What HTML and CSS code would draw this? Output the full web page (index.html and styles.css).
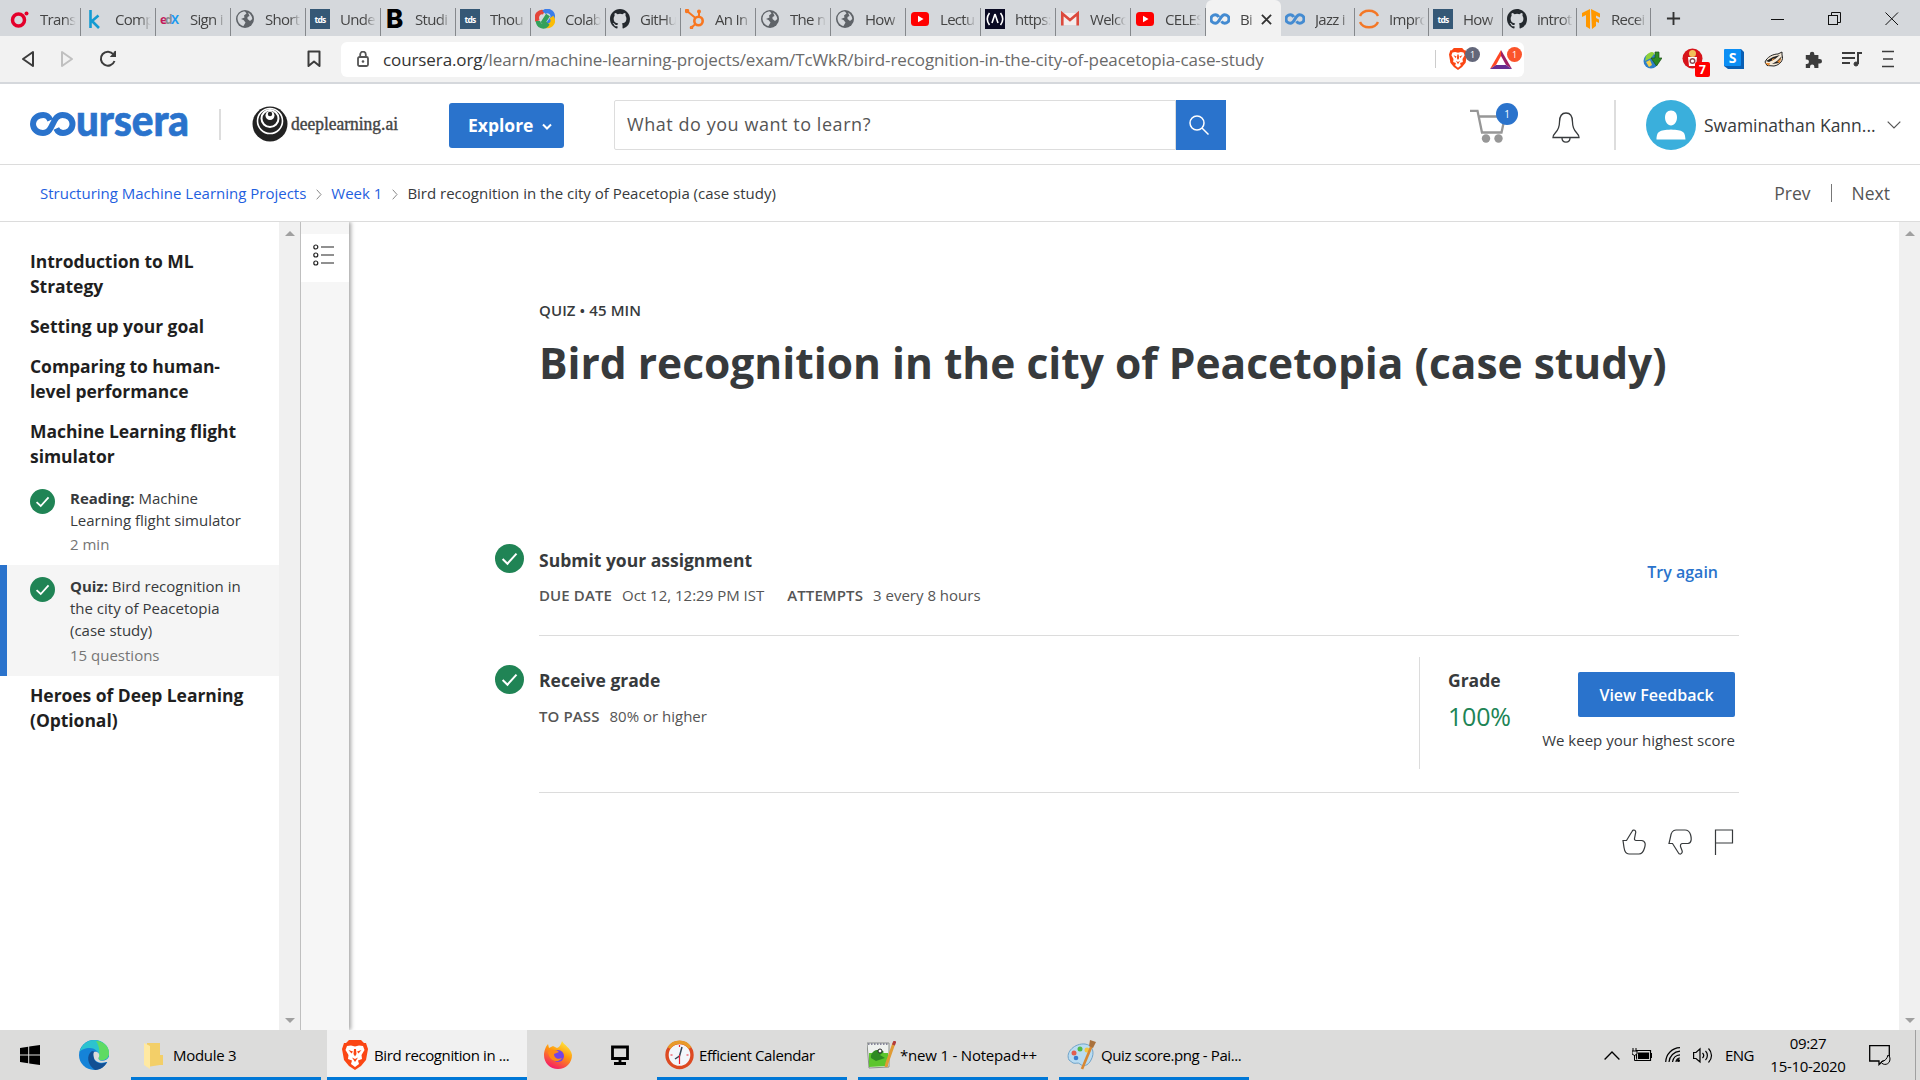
FILE: index.html
```html
<!DOCTYPE html>
<html lang="en">
<head>
<meta charset="utf-8">
<title>Bird recognition in the city of Peacetopia (case study)</title>
<link rel="stylesheet" href="styles.css">
</head>
<body>
<svg class="defs" aria-hidden="true">
  <symbol id="globe" viewBox="0 0 20 20"><circle cx="10" cy="10" r="9" fill="#5f6368"/><path d="M2.500 9C3 5 6 2.500 10 2.500L11.500 4.500 9 6.500 9.500 8.500 6 10 8.500 11 10.500 13.500 8.500 17C5 16.500 2.500 13 2.500 9ZM13 3.500C15 4.500 17 7 17.300 10L15 12 12.500 10 12.500 8 14.500 7Z" fill="#d5d8dc"/></symbol>
  <symbol id="github" viewBox="0 0 16 16"><path fill="#24292e" d="M8 0C3.580 0 0 3.580 0 8c0 3.540 2.290 6.530 5.470 7.590.4.070.55-.17.55-.38v-1.490c-2.010.37-2.530-.49-2.690-.94-.09-.23-.48-.94-.82-1.130-.28-.15-.68-.52-.01-.53.63-.01 1.080.58 1.230.82.72 1.210 1.870.87 2.330.66.07-.52.28-.87.51-1.070-1.780-.2-3.640-.89-3.640-3.950 0-.87.31-1.590.82-2.150-.08-.2-.36-1.020.08-2.120 0 0 .67-.21 2.200.82a7.600 7.600 0 0 1 4 0c1.530-1.040 2.200-.82 2.200-.82.44 1.100.16 1.920.08 2.120.51.56.82 1.270.82 2.150 0 3.070-1.870 3.750-3.650 3.950.29.25.54.73.54 1.480v2.200c0 .21.150.46.55.38A8 8 0 0 0 16 8c0-4.420-3.580-8-8-8z"/></symbol>
  <symbol id="youtube" viewBox="0 0 20 20"><rect x="1" y="3" width="18" height="14" rx="3.500" fill="#f00"/><path d="M8 6.700 13.500 10 8 13.300Z" fill="#fff"/></symbol>
  <symbol id="infinity" viewBox="0 0 20 20"><path d="M8.800 8C7.800 6.200 6.500 5.700 5.300 5.700a4.200 4.200 0 0 0 0 8.600c4.700 0 4.700-8.600 9.400-8.600a4.200 4.200 0 0 1 0 8.600c-1.600 0-2.600-.9-3.200-2" fill="none" stroke="#448bd1" stroke-width="3"/></symbol>
  <symbol id="tds" viewBox="0 0 20 20"><rect width="20" height="20" fill="#355876"/><text x="10" y="13.500" text-anchor="middle" class="tds-text">tds</text></symbol>
  <symbol id="check" viewBox="0 0 24 24"><circle cx="12" cy="12" r="12" fill="#208455"/><path d="M6.300 12.500 10.300 16.300 17.800 8" fill="none" stroke="#fff" stroke-width="1.700"/></symbol>
  <symbol id="brave" viewBox="0 0 26 30"><path d="M7 0H19L22 3 24 3 26 9 24 20 19 26 13 30 7 26 2 20 0 9 2 3 4 3Z" fill="#fb4614"/><path d="M5 6 9 5.500 13 6.500 17 5.500 21 6 22.500 10 19.500 15 20 19 16 20.500 17 24 13 27 9 24 10 20.500 6 19 6.500 15 3.500 10Z" fill="#fff"/><path d="M6.500 10 11 11.500 9.500 13.500ZM19.500 10 15 11.500 16.500 13.500ZM10 17.500 13 19 16 17.500 13 22ZM12 9H14L14.500 14 13 16.500 11.500 14Z" fill="#fb4614"/></symbol>
</svg>

<div class="tabs">
  <div class="tab"><svg class="fav" viewBox="0 0 20 20"><circle cx="8.500" cy="11" r="6" fill="none" stroke="#e4002b" stroke-width="3.500"/><circle cx="16.500" cy="4.500" r="2" fill="#e4002b"/></svg><span>Trans</span></div>
  <div class="tab"><svg class="fav" viewBox="0 0 20 20"><path d="M5.500 1V19M13.500 6.500 7 12 14 19" fill="none" stroke="#149bd2" stroke-width="2.600"/></svg><span>Comp</span></div>
  <div class="tab"><svg class="fav" viewBox="0 0 20 20"><text x="0" y="14.500" class="edx-text" fill="#c2185b">e</text><text x="5" y="14.500" class="edx-text" fill="#8a8d90">d</text><text x="11" y="14.500" class="edx-text" fill="#1b9af0">X</text></svg><span>Sign i</span></div>
  <div class="tab"><svg class="fav"><use href="#globe"/></svg><span>Short</span></div>
  <div class="tab"><svg class="fav"><use href="#tds"/></svg><span>Unde</span></div>
  <div class="tab"><svg class="fav" viewBox="0 0 20 20"><text x="1" y="19" class="b-text">B</text></svg><span>Studi</span></div>
  <div class="tab"><svg class="fav"><use href="#tds"/></svg><span>Thou</span></div>
  <div class="tab"><svg class="fav" viewBox="0 0 20 20" fill="none" stroke-width="4.500"><path d="M2.500 12C0 6 5 1.500 9 3.500" stroke="#e4453a"/><path d="M9 3.500C12 0 19 3 17.500 9L13 15" stroke="#3b7de9"/><path d="M16.500 8C20 13 16 17.500 11.500 17" stroke="#fbbc05"/><path d="M3 12C3 17 9 19 11.500 16L8.500 13 13 6" stroke="#34a05a"/></svg><span>Colab</span></div>
  <div class="tab"><svg class="fav"><use href="#github"/></svg><span>GitHu</span></div>
  <div class="tab"><svg class="fav" viewBox="0 0 20 20" fill="none" stroke="#f8761f" stroke-width="2"><circle cx="13.500" cy="12" r="4.200" stroke-width="2.600"/><path d="M2 2 10.500 9M14 8V3M10.500 15 7 18"/><circle cx="2" cy="2" r="1.300"/><circle cx="14" cy="2.500" r="1"/><circle cx="6.500" cy="18.500" r=".8"/></svg><span>An In</span></div>
  <div class="tab"><svg class="fav"><use href="#globe"/></svg><span>The n</span></div>
  <div class="tab"><svg class="fav"><use href="#globe"/></svg><span>How</span></div>
  <div class="tab"><svg class="fav"><use href="#youtube"/></svg><span>Lectu</span></div>
  <div class="tab"><svg class="fav" viewBox="0 0 20 20"><rect width="20" height="20" fill="#0a0a23"/><path d="M4.500 4C1.500 8 1.500 12 4.500 16M15.500 4C18.500 8 18.500 12 15.500 16M10 5 7 14M10 5 13 14" fill="none" stroke="#fff" stroke-width="1.600"/></svg><span>https:</span></div>
  <div class="tab"><svg class="fav" viewBox="0 0 20 20"><path d="M2 4H18V16H2Z" fill="#f3eeee"/><path d="M2.300 16.500V4.500L10 11 17.700 4.500V16.500" fill="none" stroke="#dc4a3d" stroke-width="2.600"/></svg><span>Welco</span></div>
  <div class="tab"><svg class="fav"><use href="#youtube"/></svg><span>CELES</span></div>
  <div class="tab active"><svg class="fav"><use href="#infinity"/></svg><span>Bi</span><svg class="close" viewBox="0 0 12 12"><path d="M1 1 11 11M11 1 1 11" stroke="#333" stroke-width="2"/></svg></div>
  <div class="tab late"><svg class="fav"><use href="#infinity"/></svg><span>Jazz i</span></div>
  <div class="tab late"><svg class="fav" viewBox="0 0 20 20" fill="none" stroke="#f37726" stroke-width="2.400"><path d="M1 7C4 0 16 0 19 7M1 13C4 20 16 20 19 13"/></svg><span>Impro</span></div>
  <div class="tab late"><svg class="fav"><use href="#tds"/></svg><span>How</span></div>
  <div class="tab late"><svg class="fav"><use href="#github"/></svg><span>introt</span></div>
  <div class="tab late"><svg class="fav" viewBox="0 0 20 20"><path d="M9 0V20L5 17.500V6L1 8V4ZM10 0 19 4.500V8.500L15 6.500V9L18 10.500V14L15 12.500V17L11 20Z" fill="#ff9800"/></svg><span>Recei</span></div>
  <svg class="newtab" viewBox="0 0 16 16"><path d="M8 1V15M1 8H15" stroke="#333" stroke-width="2"/></svg>
  <div class="winctl">
    <svg width="14" height="14" viewBox="0 0 14 14"><path d="M0 7.500H13" stroke="#111"/></svg>
    <svg width="14" height="14" viewBox="0 0 14 14" fill="none" stroke="#111"><rect x=".5" y="3.500" width="9" height="9"/><path d="M3.500 3.500V.5H12.500V10.500H9.500"/></svg>
    <svg width="14" height="14" viewBox="0 0 14 14"><path d="M.5.5 13 13M13 .5.5 13" stroke="#111"/></svg>
  </div>
</div>

<div class="toolbar">
  <div class="nav">
    <svg width="14" height="18" viewBox="0 0 14 18"><path d="M12 2V16L2 9Z" fill="none" stroke="#3c3c3c" stroke-width="2" stroke-linejoin="round"/></svg>
    <svg width="14" height="18" viewBox="0 0 14 18"><path d="M2 2V16L12 9Z" fill="none" stroke="#c0c0c0" stroke-width="2" stroke-linejoin="round"/></svg>
    <svg width="18" height="18" viewBox="0 0 18 18"><path d="M14.500 4.500A7 7 0 1 0 15.500 11" fill="none" stroke="#3c3c3c" stroke-width="2"/><path d="M17 .8V7H10.800C12 5 14.500 4 15 1.500Z" fill="#3c3c3c"/></svg>
  </div>
  <svg class="bookmark" viewBox="0 0 14 18"><path d="M1.500 1.500H12.500V16L7 11.500 1.500 16Z" fill="none" stroke="#3c3c3c" stroke-width="2" stroke-linejoin="round"/></svg>
  <div class="address">
    <svg class="lock" viewBox="0 0 12 16"><rect x="1" y="6" width="10" height="9" rx="1.500" fill="none" stroke="#555" stroke-width="1.800"/><path d="M3.200 6V3.500a2.800 2.800 0 0 1 5.600 0V6" fill="none" stroke="#555" stroke-width="1.800"/><circle cx="6" cy="10.500" r="1.300" fill="#555"/></svg>
    <div class="url"><b>coursera.org</b>/learn/machine-learning-projects/exam/TcWkR/bird-recognition-in-the-city-of-peacetopia-case-study</div>
    <div class="shields">
      <div class="ext"><svg width="18" height="22" viewBox="0 0 26 30" preserveAspectRatio="none"><use href="#brave"/></svg><i class="pill grey">1</i></div>
      <div class="ext bat"><svg width="22" height="19" viewBox="0 0 22 19"><path d="M11 0V6L6 15 0 19Z" fill="#ff4724"/><path d="M11 0 22 19 16 15 11 6Z" fill="#9e1f63"/><path d="M0 19 6 15H16L22 19Z" fill="#662d91"/></svg><i class="pill orange">1</i></div>
    </div>
  </div>
  <div class="extensions">
    <svg width="20" height="20" viewBox="0 0 20 20"><circle cx="9" cy="12" r="7.500" fill="#2e7fc8"/><path d="M4 7C8 1 13 3 12 5L9 9 3 12Z" fill="#8fd13a"/><path d="M13 3H17V9H20L14.500 17 9 9H13Z" fill="#2c8b22" stroke="#1b4d17" stroke-width=".7"/><path d="M4 13 8 11 10 16 7 18Z" fill="#f2cf4b"/></svg>
    <div class="ext"><svg width="22" height="22" viewBox="0 0 22 22"><circle cx="10.500" cy="10.500" r="10" fill="#d7141a"/><path d="M6 9H15L14 18H7Z" fill="#fff"/><circle cx="10.500" cy="5.500" r="3.500" fill="#f1c15a"/><circle cx="10.500" cy="13" r="2.300" fill="none" stroke="#8a4a52" stroke-width="1.500"/></svg><i class="count">7</i></div>
    <svg width="20" height="20" viewBox="0 0 20 20"><path d="M2 0H17L20 3V20H4L0 17Z" fill="#0a5fb4"/><rect width="17" height="17" rx="1" fill="#0c8ff5"/><text x="8.500" y="14" text-anchor="middle" class="s-text">S</text></svg>
    <svg width="20" height="20" viewBox="0 0 20 20"><path d="M1 13C3 8 9 5 14 5L18 3 18 6C20 11 16 16 10 17L3 16.500Z" fill="#f6ead8" stroke="#222"/><path d="M2 12 9 8 16 6 11 10 5 13ZM8 15 13 12 18 7 15 14Z" fill="#222"/><path d="M1 14 6 14 5 17ZM13 13 17 9 16 14ZM8 10 11 9 8 12Z" fill="#e88b34"/></svg>
    <svg width="18" height="19" viewBox="0 0 20 20"><path d="M2 5H6.500V4a2.500 2.500 0 0 1 5 0V5H16V9.500H17.500a2.500 2.500 0 0 1 0 5H16V19.500H11.500V18a2.400 2.400 0 0 0-4.800 0V19.500H2V15H3a2.500 2.500 0 0 0 0-5H2Z" fill="#3c3c3c"/></svg>
    <svg width="20" height="16" viewBox="0 0 20 16" fill="none" stroke="#3c3c3c" stroke-width="2"><path d="M0 2H13M0 7H13M0 12H8M16 13V2H20"/><circle cx="14" cy="13" r="2" fill="#3c3c3c" stroke-width="1"/></svg>
    <svg width="12" height="18" viewBox="0 0 12 18"><path d="M0 1.500H12M1 9H11M0 16.500H12" stroke="#3c3c3c" stroke-width="1.700"/></svg>
  </div>
</div>

<header class="site-header">
  <svg class="logo" viewBox="0 0 160 26"><path d="M20.300 9.200C18.500 5 15.500 4 13.300 4 7.500 4 3 7.800 3 13S7.500 22 13 22C24 22 21.500 4 32.500 4c6 0 10 4 10 9s-4 9-9.500 9c-3 0-5.300-1.500-6.700-4.600" fill="none" stroke="#2a73cc" stroke-width="6"/><text x="46" y="24.500" textLength="113" lengthAdjust="spacingAndGlyphs" class="logo-text">ursera</text></svg>
  <div class="partner">
    <svg width="36" height="36" viewBox="0 0 36 36"><circle cx="18" cy="18" r="17.500" fill="#222"/><g fill="none" stroke="#fff"><circle cx="18" cy="15" r="12.500" stroke-width="1.600"/><circle cx="18" cy="12.500" r="8.500" stroke-width="2"/></g><circle cx="18" cy="9.500" r="4.500" fill="#fff"/><circle cx="18" cy="8" r="2.200" fill="#222"/></svg>
    <svg width="108" height="26" viewBox="0 0 108 26"><text x="0" y="18.500" textLength="107" lengthAdjust="spacingAndGlyphs" class="partner-text">deeplearning.ai</text></svg>
  </div>
  <button class="explore"><span>Explore</span><svg width="10" height="8" viewBox="0 0 10 8"><path d="M1 1.500 5 5.500 9 1.500" fill="none" stroke="#fff" stroke-width="2"/></svg></button>
  <div class="search"><div class="field">What do you want to learn?</div><div class="go"><svg width="20" height="20" viewBox="0 0 20 20" fill="none" stroke="#fff" stroke-width="1.500"><circle cx="8" cy="8" r="7"/><path d="M13 13 19.500 19.500"/></svg></div></div>
  <div class="cart"><svg width="36" height="34" viewBox="0 0 36 34"><path d="M0 1.800H7.500L12 23.500H31.500L35 7.500H9" fill="none" stroke="#979797" stroke-width="2.300"/><circle cx="16" cy="29.500" r="4.200" fill="#979797"/><circle cx="28.500" cy="29.500" r="4.200" fill="#979797"/></svg><i class="cart-count">1</i></div>
  <svg class="bell" viewBox="0 0 28 31" fill="none" stroke="#373a3c" stroke-width="1.300"><path d="M1 25.500C1 20 7.500 21 7.500 10 7.500 4 10 1 14 1S20.500 4 20.500 10C20.500 21 27 20 27 25.500Z"/><path d="M10 26C10 31.500 18 31.500 18 26"/></svg>
  <div class="user"><svg width="50" height="50" viewBox="0 0 50 50"><circle cx="25" cy="25" r="25" fill="#3aafdc"/><path d="M25 10.500c4 0 6 3 6 7s-2.500 8-6 8-6-4-6-8 2-7 6-7ZM10.500 39.500C11 31 13 30.500 25 29.500 37 30.500 39 31 39.500 39.500Z" fill="#fff"/></svg><span>Swaminathan Kann...</span><svg width="14" height="8" viewBox="0 0 14 8"><path d="M.7.700 7 7 13.300.7" fill="none" stroke="#555" stroke-width="1.200"/></svg></div>
</header>

<nav class="crumbs">
  <a>Structuring Machine Learning Projects</a><svg class="sep" viewBox="0 0 6 11"><path d="M.7.700 5 5.500.7 10.300" fill="none" stroke="#888"/></svg><a>Week 1</a><svg class="sep" viewBox="0 0 6 11"><path d="M.7.700 5 5.500.7 10.300" fill="none" stroke="#888"/></svg><span>Bird recognition in the city of Peacetopia (case study)</span>
  <div class="pager"><span>Prev</span><i></i><span>Next</span></div>
</nav>

<div class="body">
  <aside class="sidebar">
    <h3>Introduction to ML Strategy</h3>
    <h3>Setting up your goal</h3>
    <h3>Comparing to human-level performance</h3>
    <h3>Machine Learning flight simulator</h3>
    <div class="item"><svg><use href="#check"/></svg><div><p><b>Reading:</b> Machine Learning flight simulator</p><small>2 min</small></div></div>
    <div class="item current"><svg><use href="#check"/></svg><div><p><b>Quiz:</b> Bird recognition in the city of Peacetopia (case study)</p><small>15 questions</small></div></div>
    <h3>Heroes of Deep Learning (Optional)</h3>
  </aside>
  <div class="scrollbar"><i class="up"></i><i class="down"></i></div>
  <div class="rail"><div class="toggle"><svg width="22" height="22" viewBox="0 0 22 22" fill="none" stroke="#222" stroke-width="1.200"><circle cx="2.800" cy="3" r="2"/><circle cx="2.800" cy="11" r="2"/><circle cx="2.800" cy="19" r="2"/><path d="M8 3H21M8 11H21M8 19H21"/></svg></div></div>
  <main class="main">
    <div class="kind">QUIZ • 45 MIN</div>
    <h1>Bird recognition in the city of Peacetopia (case study)</h1>
    <section class="step submit">
      <svg class="done"><use href="#check"/></svg>
      <div class="info"><h2>Submit your assignment</h2><p><b>DUE DATE</b><span>Oct 12, 12:29 PM IST</span><b>ATTEMPTS</b><span>3 every 8 hours</span></p></div>
      <a class="retry">Try again</a>
    </section>
    <section class="step receive">
      <svg class="done"><use href="#check"/></svg>
      <div class="info"><h2>Receive grade</h2><p><b>TO PASS</b><span>80% or higher</span></p></div>
      <div class="result">
        <div class="grade"><h2>Grade</h2><div class="score">100%</div></div>
        <div class="feedback"><button>View Feedback</button><p>We keep your highest score</p></div>
      </div>
    </section>
    <div class="votes">
      <svg width="24" height="26" viewBox="0 0 24 26"><path d="M1 11.500H4.500L10 2.500C11.500-.5 14.500 1.500 13.500 4.500L12.500 9.500C12.300 10.800 13 11.500 14 11.500H19.500C24 12 23.500 16 22.500 19 21.500 22.500 20 25 17 25H7C3.500 25 2.500 22 2 18.500Z" fill="none" stroke="#373a3c" stroke-width="1.200"/></svg>
      <svg width="24" height="26" viewBox="0 0 24 26"><path d="M1 14.500H4.500L10.500 24C12 26.500 15 24 14 21.500L12.500 17.500C12.300 15.500 13 14.500 14.500 14.500H20C24 14 23.500 9 22.500 5.500 21.500 2.500 20 1 17 1H8C4 1 3 4 2.500 8Z" fill="none" stroke="#373a3c" stroke-width="1.200"/></svg>
      <svg width="20" height="26" viewBox="0 0 20 26"><path d="M1.500 26V1H18.500V14H1.500" fill="none" stroke="#373a3c" stroke-width="1.200"/></svg>
    </div>
  </main>
  <div class="scrollbar page"><i class="up"></i><i class="down"></i></div>
</div>

<footer class="taskbar">
  <div class="start"><svg width="20" height="20" viewBox="0 0 20 20"><path d="M0 3 8.200 1.800V9.500H0ZM9.200 1.600 20 0V9.500H9.200ZM0 10.500H8.200V18.200L0 17ZM9.200 10.500H20V20L9.200 18.400Z"/></svg></div>
  <svg class="edge" viewBox="0 0 30 30"><circle cx="15" cy="15" r="15" fill="#1583d8"/><path d="M.5 12C3 3 10 0 15 0 24 0 30 6 30 13 30 18 26 21 21 20 19 19 19 18 20 16 20 11 15 8 11 8 6 8 2 10 .5 12Z" fill="#2cc3cf"/><path d="M21 1.500C28 4 30 9 30 13 30 18 26 21 21 20 19 19 19 18 20 16 21 12 20 5 17 1Z" fill="#5fdb63"/><path d="M13 11C7 15 8 25 16 29.900 22 30 26 26 28 22 22 25 16 23 15 18 14 15 15 13 17 12Z" fill="#124f93"/><path d="M15 12C19 11 21 14 20 17 19 18 19 19 21 20.500 25 21.500 28 20 30 17V22H27C22 24 16 22 15 18 14.500 15 14 14 15 12Z" fill="#dcdcdb"/></svg>
  <div class="app folder"><svg width="19" height="27" viewBox="0 0 19 27"><path d="M3 1H16V23L3 25Z" fill="#f3cf68"/><path d="M0 1 6 4V27L0 23Z" fill="#ffe9a2"/><path d="M16 13H19V23H16Z" fill="#f3cf68"/></svg><span>Module 3</span></div>
  <div class="app brave"><svg width="26" height="30"><use href="#brave"/></svg><span>Bird recognition in ...</span></div>
  <svg class="firefox" viewBox="0 0 28 28"><defs><linearGradient id="fx" x1=".8" y1="0" x2=".3" y2="1"><stop offset="0" stop-color="#fff044"/><stop offset=".45" stop-color="#ff980e"/><stop offset="1" stop-color="#f5156c"/></linearGradient></defs><path d="M18 0C20 4 27 7 28 14 28 22 22 28 14 28S0 22 0 14C0 10 2 5 4 3L5 7 9 5 13 7C16 6 17 3 18 0Z" fill="url(#fx)"/><circle cx="14" cy="15" r="6" fill="#7543e5"/><path d="M4 11C9 8 13 9 15 11L10 13C10 17 14 19 18 17 14 23 5 20 4 11Z" fill="#ff8a16"/></svg>
  <svg class="monitor" viewBox="0 0 18 20"><path d="M1.500 2H16.500V13.500H1.500ZM9 14V18M3 18.500H15" fill="none" stroke="#000" stroke-width="2.800"/></svg>
  <div class="app calendar"><svg width="29" height="30" viewBox="0 0 29 30"><circle cx="14.500" cy="15" r="12.500" fill="#f3f6fa" stroke="#dd4a22" stroke-width="3.400"/><path d="M4 8A12.500 12.500 0 0 1 25 8" fill="none" stroke="#e89a28" stroke-width="3.400"/><path d="M17 7 14.500 16 10 19" fill="none" stroke="#345" stroke-width="1.500"/><path d="M14.500 15V24M14.500 5V7M5.500 15H7.500M21.500 15H23.500" stroke="#e23" stroke-width="1.200"/></svg><span>Efficient Calendar</span></div>
  <div class="app notepad"><svg width="29" height="28" viewBox="0 0 29 28"><path d="M0 2H22V26L2 27Z" fill="#eef1ee" stroke="#8a8f8a"/><path d="M2 12H21V25L2 26Z" fill="#5cc52d"/><path d="M1 3H21" stroke="#889" stroke-width="2" stroke-dasharray="1.500 1.500"/><path d="M4 17C3 10 12 6 17 11L13 14 18 17 9 20Z" fill="#2e8a22"/><circle cx="13" cy="10" r="2" fill="#fff" stroke="#222"/><path d="M27 2 20 22 19 26" stroke="#e09b35" stroke-width="3" fill="none"/><path d="M28 0 26.500 4" stroke="#b33b3b" stroke-width="3"/></svg><span>*new 1 - Notepad++</span></div>
  <div class="app paint"><svg width="30" height="30" viewBox="0 0 30 30"><path d="M2 20C-2 12 8 3 18 4 26 5 28 13 24 20 21 26 16 27 13 24 11 22 9 24 6 23Z" fill="#b9dcf2" stroke="#6fa3c9"/><circle cx="13" cy="9" r="2.500" fill="#54b948"/><circle cx="7" cy="13" r="2.500" fill="#e35d4f"/><circle cx="20" cy="10" r="2.500" fill="#f1c644"/><circle cx="9" cy="18" r="2.300" fill="#397cd0"/><path d="M25 5 15 29" stroke="#d78835" stroke-width="2.600"/><path d="M23 0 29 2 26 8 22 6Z" fill="#a9713c"/></svg><span>Quiz score.png - Pai...</span></div>
  <div class="tray">
    <svg width="16" height="9" viewBox="0 0 16 9"><path d="M.6 8.500 8 1 15.400 8.500" fill="none" stroke="#000" stroke-width="1.300"/></svg>
    <svg class="battery" width="20" height="14" viewBox="0 0 20 14"><path d="M4.500 2.500H18.500V12.500H4.500ZM19.500 5V10" fill="none" stroke="#000" stroke-width="1.200"/><path d="M6 4.500H17V11H6Z"/><path d="M0 3H5V6L2.500 7.500 0 6ZM1 0V3M4 0V3M2.500 7V12.500H5" stroke="#000" fill="#dcdcdb"/></svg>
    <svg class="wifi" width="16" height="16" viewBox="0 0 16 16" fill="none" stroke="#000" stroke-width="1.200"><path d="M.7 15C1 7 7 1 15 .7M4 15C4.500 9 9 4.500 15 4.200M7.500 15C8 11 11 8 15 7.800"/><circle cx="13.500" cy="13.500" r="1.500" fill="#000" stroke="none"/><path d="M11 15C11 13 13 11 15 11"/></svg>
    <svg class="volume" width="20" height="17" viewBox="0 0 20 17" fill="none" stroke="#000" stroke-width="1.200"><path d="M.6 5.500H3L7 1.800V15L3 11.500H.6ZM9.500 6C11 7.500 11 9.500 9.500 11M12.500 4C15 6.500 15 10.500 12.500 13M15.500 1.500C19.500 5.500 19.500 11.500 15.500 15.500"/></svg>
    <span class="lang">ENG</span>
    <div class="clock"><span>09:27</span><span>15-10-2020</span></div>
    <svg class="notice" width="22" height="21" viewBox="0 0 22 21"><path d="M.7.700H20.300V16H14L10 19.500V16H.7Z" fill="none" stroke="#000" stroke-width="1.300"/><path d="M19 10C18 14 16 16 12 17 14 21 21 20 21 14 21 12 20 11 19 10Z" fill="#dcdcdb" stroke="#000"/></svg>
    <i class="desk"></i>
  </div>
</footer>
</body>
</html>
```
FILE: styles.css
```css
* { box-sizing: border-box; }
body { margin: 0; width: 1920px; height: 1080px; overflow: hidden; background: #fff; color: #373a3c; font-family: "Open Sans", sans-serif; display: flex; flex-direction: column; }
h1, h2, h3, p { margin: 0; }
i { font-style: normal; }
svg { display: block; flex: none; }
button { border: 0; font: inherit; padding: 0; }
.defs { position: absolute; width: 0; height: 0; }

/* browser tabs */
.tabs { height: 36px; background: #d5d8dc; display: flex; padding-left: 6px; flex: none; }
.tab { width: 75px; height: 36px; display: flex; align-items: center; padding: 2px 0 0 4px; border-right: 1px solid #85888c; border-image: linear-gradient(transparent 9px, #85888c 9px) 1; border-width: 0 1px 0 0; border-style: solid; font-size: 15px; letter-spacing: -.7px; color: #444; }
.tab.late { width: 74px; }
.tab span { margin-left: 10px; width: 36px; white-space: nowrap; overflow: hidden; flex: none; mask-image: linear-gradient(90deg, #000 68%, transparent 100%); }
.tab .fav { width: 20px; height: 20px; }
.tab.active { background: #f2f2f2; border-image: none; border-color: transparent; border-radius: 6px 6px 0 0; }
.tab.active span { width: 14px; }
.tab.active .close { width: 11px; height: 11px; margin-left: 7px; }
.newtab { width: 15px; height: 15px; margin: 11px 0 0 15px; }
.winctl { margin: 12px 21px 0 auto; display: flex; gap: 43px; }
.tds-text { font: 700 8.500px "Open Sans", sans-serif; fill: #fff; }
.edx-text { font: 700 12px "Open Sans", sans-serif; }
.b-text { font: 800 26px Inter, sans-serif; }
.s-text { font: 700 14px "Open Sans", sans-serif; fill: #fff; }

/* address row */
.toolbar { height: 48px; background: #f2f2f2; border-bottom: 2px solid #d5d8dc; display: flex; align-items: center; flex: none; }
.nav { display: flex; gap: 25px; align-items: center; width: 307px; padding-left: 21px; }
.bookmark { width: 14px; height: 18px; }
.address { margin-left: 20px; width: 1183px; height: 35px; background: #fff; border-radius: 6px; display: flex; align-items: center; padding-left: 16px; }
.lock { width: 12px; height: 16px; }
.url { margin-left: 14px; font-size: 17px; color: #6a6a6a; white-space: nowrap; width: 1052px; letter-spacing: -.1px; }
.url b { font-weight: 400; color: #333; }
.shields { border-left: 1px solid #ccc; height: 18px; display: flex; align-items: center; padding-left: 13px; gap: 23px; }
.ext { position: relative; }
.pill { position: absolute; left: 16px; top: -1px; width: 15px; height: 15px; border-radius: 8px; color: #fff; font-size: 9px; line-height: 15px; text-align: center; }
.pill.grey { background: #63677a; }
.pill.orange { background: #fb542b; left: 17px; top: -3px; }
.count { position: absolute; left: 13px; top: 14px; width: 15px; height: 15px; border-radius: 2px; background: #f00; color: #fff; font: 700 12px/15px "Open Sans", sans-serif; text-align: center; }
.extensions { display: flex; align-items: center; margin-left: 118px; gap: 20px; }

/* site header */
.site-header { height: 81px; border-bottom: 1px solid #dcdcdc; display: flex; align-items: center; flex: none; padding-left: 30px; }
.logo { width: 160px; height: 26px; margin-top: -1px; }
.logo-text { font: 900 43px Lato, sans-serif; fill: #2a73cc; stroke: #2a73cc; stroke-width: .7px; }
.partner { margin-left: 29px; border-left: 2px solid #ddd; height: 31px; display: flex; align-items: center; padding-left: 31px; gap: 3px; width: 230px; }
.partner-text { font: 18px "Liberation Serif", serif; fill: #444; stroke: #444; stroke-width: .4px; }
.explore { width: 115px; height: 45px; margin-top: 2px; border-radius: 3px; background: #2a73cc; color: #fff; font-weight: 700; font-size: 17.500px; display: flex; align-items: center; padding-left: 19px; gap: 9px; }
.explore svg { margin-top: 3px; }
.search { margin: 2px 0 0 50px; display: flex; height: 50px; }
.field { width: 562px; border: 1px solid #ddd; border-radius: 2px 0 0 2px; padding-left: 12px; font-size: 18px; letter-spacing: .55px; line-height: 46px; color: #555; font-family: "Noto Sans", "Open Sans", sans-serif; }
.field { font-family: "Open Sans", sans-serif; }
.go { width: 50px; background: #2a73cc; display: flex; align-items: center; justify-content: center; padding-right: 4px; }
.cart { margin: 4px 0 0 244px; position: relative; width: 36px; }
.cart-count { position: absolute; left: 26px; top: -6px; width: 22px; height: 22px; border-radius: 50%; background: #2a73cc; color: #fff; font-size: 10px; line-height: 22px; text-align: center; }
.bell { width: 28px; height: 31px; margin: 7px 0 0 46px; }
.user { margin: 2px 0 0 34px; border-left: 2px solid #ddd; height: 50px; display: flex; align-items: center; padding-left: 30px; font-size: 17.500px; }
.user span { margin-left: 8px; width: 183px; white-space: nowrap; }
.crumbs { height: 57px; border-bottom: 1px solid #dcdcdc; display: flex; align-items: center; padding-left: 40px; font-size: 15px; flex: none; }
.crumbs a { color: #1f5fe0; }
.sep { width: 6px; height: 11px; margin: 3px 9px 0 10px; }
.pager { margin: 0 30px 0 auto; display: flex; align-items: center; gap: 20px; font-size: 17.500px; color: #555; }
.pager i { width: 1px; height: 18px; background: #777; }

/* course content */
.body { display: flex; height: 808px; flex: none; }
.sidebar { width: 279px; padding-top: 27px; display: flex; flex-direction: column; }
.sidebar h3 { font-size: 17.500px; line-height: 25px; font-weight: 700; letter-spacing: -.05px; color: #1f1f1f; margin: 0 30px 15px; }
.item { display: flex; padding: 3px 0 0 30px; height: 81px; font-size: 15px; line-height: 22px; }
.item svg { width: 25px; height: 25px; margin: 2px 15px 0 0; }
.item div { width: 185px; }
.item b { font-weight: 700; }
.item small { display: block; font-size: 15px; color: #757575; margin-top: 2px; }
.item.current { background: #f5f5f5; border-left: 7px solid #2a73cc; padding: 10px 0 0 23px; height: 111px; margin-bottom: 7px; }
.item.current small { margin-top: 3px; }
.scrollbar { width: 21px; background: #f0f0f0; display: flex; flex-direction: column; justify-content: space-between; align-items: center; padding: 9px 0 7px; }
.scrollbar i { border: 5px solid transparent; }
.scrollbar .up { border-top: 0; border-bottom-color: #a0a0a0; }
.scrollbar .down { border-bottom: 0; border-top-color: #a0a0a0; }
.rail { width: 49px; border-left: 1px solid #bfbfbf; background: #f6f6f6; padding-top: 12px; box-shadow: 2px 0 4px rgba(0,0,0,.35); clip-path: inset(0 -8px 0 0); }
.toggle { height: 48px; background: #fff; padding: 10px 0 0 12px; }
.main { width: 1550px; padding: 77px 160px 0 190px; }
.kind { font-size: 15px; font-weight: 600; line-height: 22px; letter-spacing: .1px; }
h1 { font-size: 42.500px; line-height: 60px; font-weight: 700; color: #373a3c; margin-top: 12px; white-space: nowrap; }
h2 { font-size: 17.500px; line-height: 24px; font-weight: 700; }
.step { display: flex; margin-left: -44px; position: relative; }
.step::after { content: ""; position: absolute; left: 44px; right: 0; bottom: 0; height: 1px; background: #dcdcdc; }
.submit { margin-top: 151px; height: 92px; }
.receive { height: 157px; }
.done { width: 29px; height: 29px; margin-right: 15px; }
.receive .done { margin-top: 29px; }
.info { flex: 1; padding-top: 4px; }
.receive .info { padding-top: 32px; }
.info p { margin-top: 12px; font-size: 15px; line-height: 22px; color: #555; display: flex; }
.receive .info p { margin-top: 13px; }
.info b { font-weight: 600; margin-right: 10px; letter-spacing: .1px; }
.info span { margin-right: 23px; }
.retry { color: #2a73cc; font-size: 16px; font-weight: 600; line-height: 22px; margin: 17px 21px 0 0; }
.result { border-left: 1px solid #dcdcdc; width: 320px; height: 112px; margin-top: 21px; display: flex; justify-content: space-between; padding: 11px 4px 0 28px; }
.score { color: #208455; font-size: 25px; letter-spacing: -.2px; line-height: 34px; margin-top: 7px; }
.feedback { display: flex; flex-direction: column; align-items: flex-end; padding-top: 4px; }
.feedback button { width: 157px; height: 45px; border-radius: 2px; background: #2a73cc; color: #fff; font-weight: 600; font-size: 16px; }
.feedback p { font-size: 15px; line-height: 22px; margin-top: 12px; white-space: nowrap; }
.votes { display: flex; justify-content: flex-end; gap: 22px; margin: 36px 5px 0 0; }

/* taskbar */
.taskbar { height: 50px; background: #dcdcdb; display: flex; align-items: center; font-size: 15px; color: #000; flex: none; letter-spacing: -.4px; }
.start { width: 79px; padding-left: 20px; }
.edge { width: 30px; height: 30px; }
.app { height: 50px; border-bottom: 3px solid #0078d7; display: flex; align-items: center; padding-top: 3px; width: 190px; white-space: nowrap; }
.folder { margin-left: 22px; padding-left: 13px; gap: 10px; letter-spacing: -.3px; }
.brave { margin-left: 6px; width: 200px; background: #f1f1f1; padding-left: 15px; gap: 6px; }
.firefox { width: 28px; height: 30px; margin-left: 17px; }
.monitor { width: 18px; height: 20px; margin-left: 39px; }
.calendar { margin-left: 28px; padding-left: 8px; gap: 5px; }
.notepad { margin-left: 11px; padding-left: 9px; gap: 4px; letter-spacing: -.2px; }
.paint { margin-left: 11px; padding-left: 8px; gap: 4px; }
.tray { margin-left: auto; display: flex; align-items: center; width: 316px; height: 50px; letter-spacing: -.3px; }
.battery { margin-left: 12px; }
.wifi { margin-left: 13px; }
.volume { margin-left: 12px; }
.lang { margin-left: 12px; width: 28px; letter-spacing: -.6px; }
.clock { margin-left: 15px; width: 80px; display: flex; flex-direction: column; align-items: center; line-height: 23px; }
.notice { margin-left: 21px; }
.desk { width: 1px; height: 50px; background: #a0a0a0; margin-left: 24px; }
```
